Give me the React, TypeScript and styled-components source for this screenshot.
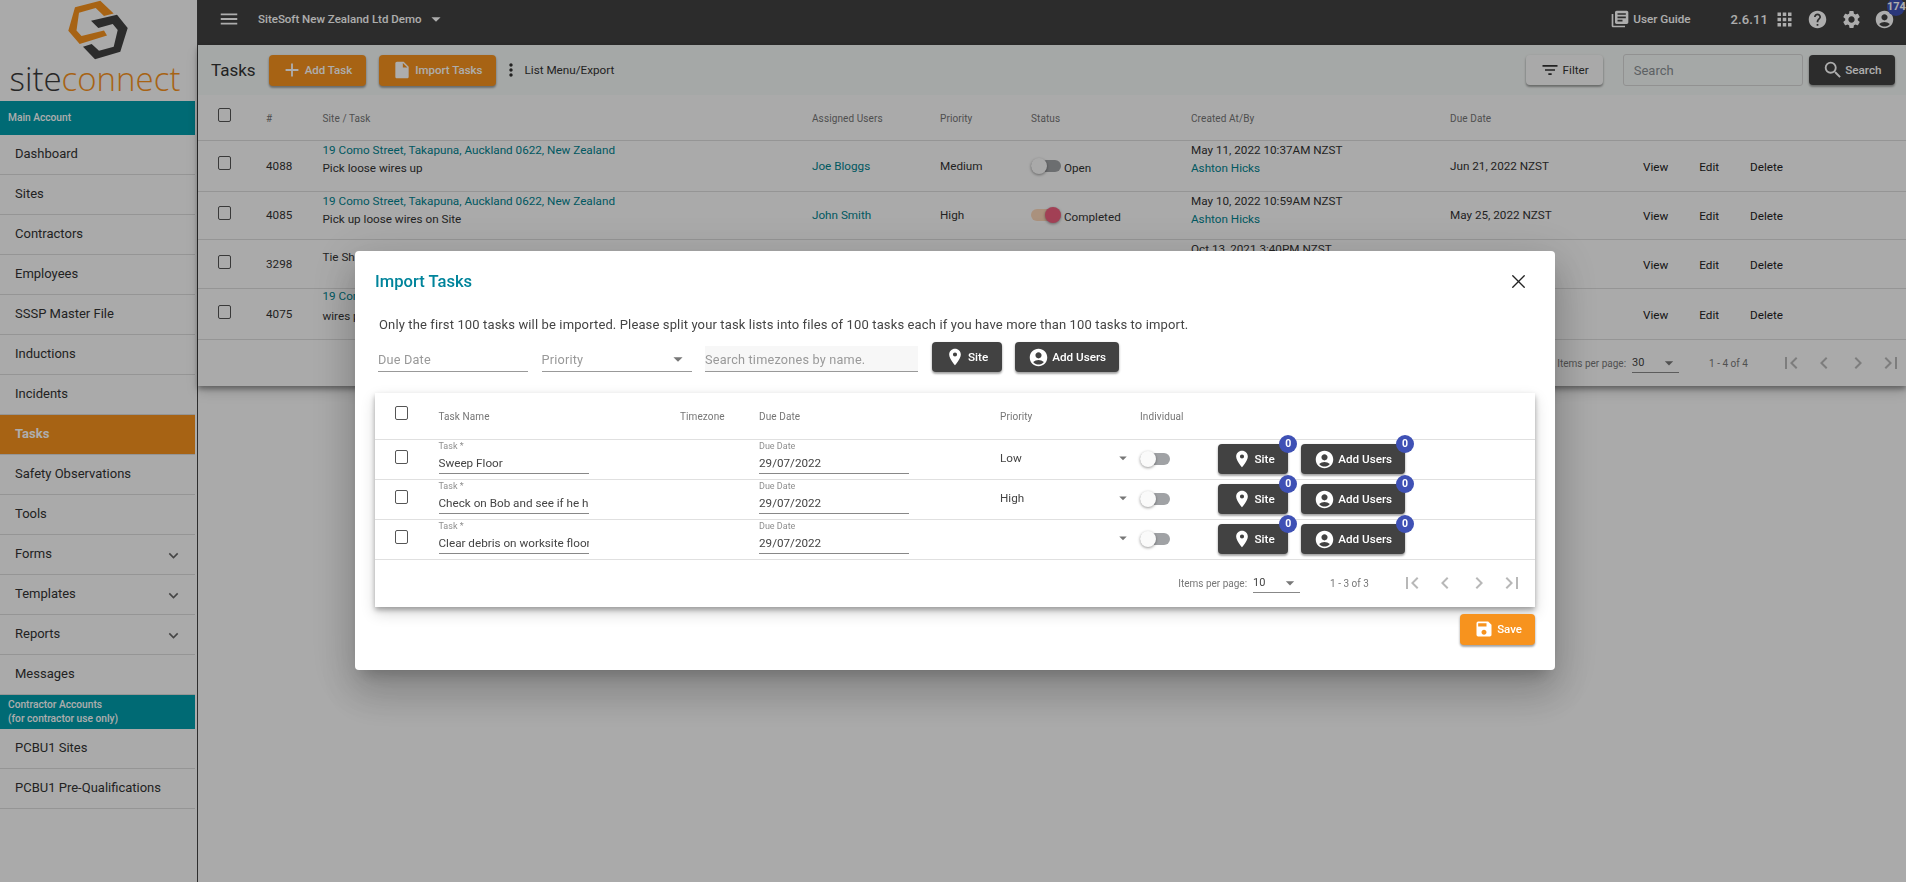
import React from 'react'
import styled, { createGlobalStyle } from 'styled-components'
import { X } from 'lucide-react'
import {
  MdAccountCircle,
  MdAdd,
  MdApps,
  MdArrowDropDown,
  MdChevronLeft,
  MdChevronRight,
  MdExpandMore,
  MdFilterList,
  MdFirstPage,
  MdHelp,
  MdInsertDriveFile,
  MdLastPage,
  MdLibraryBooks,
  MdMenu,
  MdMoreVert,
  MdRoom,
  MdSave,
  MdSearch,
  MdSettings,
} from 'react-icons/md'

const GlobalStyle = createGlobalStyle`
  html, body {
    margin: 0;
    padding: 0;
    background: #fbfbfb;
    font-family: Roboto, "Liberation Sans", sans-serif;
    color: #333;
  }
  * { box-sizing: border-box; }
`

const Page = styled.div`
  display: flex;
  width: 1906px;
  height: 882px;
  overflow: hidden;
  background: #fbfbfb;
`

/* sidebar */
const Sidebar = styled.aside`
  width: 198px;
  flex: none;
  padding-right: 2px;
  border-right: 1px solid #444;
`
const LogoBlock = styled.div`
  height: 101px;
  display: flex;
  flex-direction: column;
  align-items: center;
`
const LogoWord = styled.div`
  font-family: "Open Sans", sans-serif;
  font-size: 33px;
  font-weight: 300;
  line-height: 34px;
  margin-top: 2px;
  margin-right: 5px;
  color: #3a3a3a;
  span { color: #f7931e; }
`
const AccountLabel = styled.div`
  height: 34px;
  display: flex;
  flex-direction: column;
  justify-content: center;
  background: #009dac;
  color: #fff;
  font-size: 10.2px;
  font-weight: 500;
  line-height: 14px;
  padding-left: 8px;
`
const MenuItem = styled.div<{ $active?: boolean }>`
  height: 40px;
  display: flex;
  align-items: center;
  justify-content: space-between;
  padding: 0 12px 2px 15px;
  font-size: 13px;
  font-weight: ${(p) => (p.$active ? 700 : 400)};
  color: ${(p) => (p.$active ? '#fff' : '#333')};
  background: ${(p) => (p.$active ? '#f7931e' : 'transparent')};
  border-bottom: 1px solid #dcdcdc;
  svg { color: #666; margin-top: 4px; }
`

/* main column */
const Main = styled.main`
  flex: 1;
  min-width: 0;
`
const TopBar = styled.header`
  height: 45px;
  display: flex;
  align-items: center;
  padding: 0 11px 7px 20px;
  background: #424242;
  color: #fff;
`
const CompanyName = styled.div`
  display: flex;
  align-items: center;
  gap: 4px;
  font-size: 11.5px;
  font-weight: 500;
  margin-left: 18px;
`
const TopRight = styled.div`
  margin-left: auto;
  display: flex;
  align-items: center;
`
const GuideLabel = styled.span`
  font-size: 11.7px;
  font-weight: 500;
  margin-left: 3px;
`
const Version = styled.span`
  font-size: 13px;
  font-weight: 500;
  letter-spacing: 0.1px;
  margin: 0 1px 0 40px;
`
const TopIcon = styled.span<{ $gap: number }>`
  position: relative;
  display: flex;
  margin-left: ${(p) => p.$gap}px;
`
const CountBadge = styled.span`
  position: absolute;
  top: -11px;
  right: -10px;
  width: 18px;
  height: 18px;
  border-radius: 50%;
  background: #3f51b5;
  color: #fff;
  font-size: 11px;
  font-weight: 700;
  text-align: center;
  line-height: 18px;
`

const Card = styled.section`
  background: #fbfbfb;
  box-shadow: 0 3px 5px rgba(0, 0, 0, 0.35), 0 6px 12px rgba(0, 0, 0, 0.14);
`
const Toolbar = styled.div`
  height: 50px;
  display: flex;
  align-items: center;
  padding: 0 11px 0 13px;
  background: #f4f8f6;
`
const PageTitle = styled.h1`
  margin: 0 13px 0 0;
  font-size: 17px;
  font-weight: 400;
  color: #333;
`
const Button = styled.button<{ $tone: 'orange' | 'dark' | 'light' }>`
  position: relative;
  height: ${(p) => (p.$tone === 'orange' ? 31 : 30)}px;
  display: inline-flex;
  align-items: center;
  gap: 3px;
  padding: 0 13px;
  border: 0;
  border-radius: 4px;
  font-family: inherit;
  font-size: ${(p) => (p.$tone === 'orange' ? 11.5 : 11.7)}px;
  font-weight: ${(p) => (p.$tone === 'light' ? 400 : 500)};
  white-space: nowrap;
  color: ${(p) => (p.$tone === 'light' ? '#333' : '#fff')};
  background: ${(p) =>
    p.$tone === 'orange' ? '#f7931e' : p.$tone === 'dark' ? '#424242' : '#fafafa'};
  box-shadow: 0 2px 2px rgba(0, 0, 0, 0.25), 0 1px 3px rgba(0, 0, 0, 0.2);
`
const AddTaskButton = styled(Button)`
  margin-right: 13px;
  padding-right: 14px;
  svg { margin: 0 -1px; }
`
const FilterButton = styled(Button)`
  padding: 0 14px;
`
const SearchButton = styled(Button)`
  padding: 0 13.5px;
  svg { margin-right: -2px; }
`
const SiteAction = styled(Button)`
  padding: 0 13.5px;
`
const ListMenu = styled.div`
  display: flex;
  align-items: center;
  margin-left: 5px;
  gap: 4px;
  font-size: 11.7px;
  color: #333;
`
const ToolbarRight = styled.div`
  margin-left: auto;
  display: flex;
  align-items: center;
`
const SearchBox = styled.input`
  width: 180px;
  height: 32px;
  margin: 0 6px 0 20px;
  padding: 0 10px;
  border: 1px solid #d6d6d6;
  border-radius: 3px;
  background: transparent;
  font-family: inherit;
  font-size: 13px;
  &::placeholder { color: #8a8f94; opacity: 1; }
`

/* tasks table */
const taskCols = '48px 56.5px 489.5px 128px 91px 160px 259px 193px 1fr'
const TaskRow = styled.div<{ $h: number }>`
  height: ${(p) => p.$h}px;
  display: grid;
  grid-template-columns: ${taskCols};
  align-items: center;
  padding-left: 20px;
  border-bottom: 1px solid #dcdcdc;
  font-size: 11.7px;
  color: #333;
`
const HeadCell = styled.div`
  font-size: 10px;
  font-weight: 400;
  letter-spacing: 0.1px;
  color: #757575;
  padding-top: 2px;
`
const Check = styled.input.attrs({ type: 'checkbox' })`
  appearance: none;
  display: block;
  width: 13px;
  height: 14px;
  margin: 0 0 5px;
  border: 1.3px solid #555;
  border-radius: 2px;
  background: transparent;
`
const Stack = styled.div<{ $top?: number; $line?: number }>`
  align-self: start;
  margin-top: ${(p) => p.$top ?? 0}px;
  line-height: ${(p) => p.$line ?? 18}px;
  white-space: nowrap;
`
const TealLink = styled.div`
  color: #00838f;
  white-space: nowrap;
`
const StatusCell = styled.div`
  display: flex;
  align-items: center;
  gap: 3px;
  span { padding-top: 4px; }
`
const Track = styled.div<{ $on?: boolean }>`
  position: relative;
  width: 30px;
  height: 12px;
  flex: none;
  border-radius: 6px;
  background: ${(p) => (p.$on ? '#fbd6b8' : '#a0a2a5')};
`
const Thumb = styled.div<{ $on?: boolean }>`
  position: absolute;
  top: -2px;
  left: ${(p) => (p.$on ? 14 : 0)}px;
  width: 16px;
  height: 16px;
  border-radius: 50%;
  background: ${(p) => (p.$on ? '#ef5f7e' : '#fafafa')};
  box-shadow: 0 1px 3px rgba(0, 0, 0, 0.4);
`
const Actions = styled.div`
  display: flex;
  gap: 31px;
  padding-top: 2px;
  color: #222;
`

/* paginator shared by both tables */
const Pager = styled.div<{ $right: number }>`
  height: ${(p) => (p.$right === 3 ? 46 : 47)}px;
  display: flex;
  justify-content: flex-end;
  align-items: center;
  padding-right: ${(p) => p.$right}px;
  font-size: 10px;
  color: #777;
`
const PageSize = styled.div`
  width: 47px;
  height: 20px;
  margin: 0 30px 0 6px;
  display: flex;
  align-items: center;
  justify-content: space-between;
  border-bottom: 1px solid #888;
  color: #444;
  font-size: 11px;
  svg { color: #777; }
`
const PagerIcons = styled.div`
  display: flex;
  gap: 9.4px;
  margin-left: 31px;
  color: #b8b8b8;
`

/* import dialog */
const Backdrop = styled.div`
  position: fixed;
  inset: 0;
  padding: 251px 0 0 355px;
  background: rgba(0, 0, 0, 0.32);
`
const Dialog = styled.div`
  width: 1200px;
  height: 419px;
  padding: 0 20px 27px;
  border-radius: 4px;
  background: #fff;
  box-shadow: 0 11px 15px -7px rgba(0, 0, 0, 0.2), 0 24px 38px 3px rgba(0, 0, 0, 0.14),
    0 9px 46px 8px rgba(0, 0, 0, 0.12);
`
const DialogHead = styled.div`
  height: 60px;
  display: flex;
  align-items: center;
  justify-content: space-between;
  padding-right: 5.5px;
  svg { color: #222; }
`
const DialogTitle = styled.h2`
  margin: 0;
  font-size: 16.6px;
  font-weight: 500;
  color: #00849b;
`
const Intro = styled.p`
  margin: 0;
  padding-left: 4px;
  font-size: 13px;
  line-height: 28px;
  letter-spacing: 0.13px;
  color: #444;
`
const FilterRow = styled.div`
  height: 30px;
  margin-top: 3px;
  padding-left: 3px;
  display: flex;
  gap: 13.5px;
`
const Underlined = styled.div<{ $w: number; $tint?: boolean }>`
  width: ${(p) => p.$w}px;
  height: 26px;
  margin-top: 4px;
  padding-top: 1px;
  display: flex;
  align-items: center;
  justify-content: space-between;
  border-bottom: 1px solid #999;
  background: ${(p) => (p.$tint ? '#f7f7f7' : 'transparent')};
  font-size: 12.7px;
  letter-spacing: 0.2px;
  color: #999;
  svg { color: #777; margin-right: 3px; }
`
const InnerCard = styled.div`
  margin-top: 21px;
  background: #fff;
  box-shadow: 0 3px 5px rgba(0, 0, 0, 0.3), 0 6px 14px rgba(0, 0, 0, 0.16);
`
const importCols = '43.5px 241.5px 79px 241px 140px 78px 1fr'
const ImportRow = styled.div<{ $h: number }>`
  height: ${(p) => p.$h}px;
  display: grid;
  grid-template-columns: ${importCols};
  align-items: center;
  padding-left: 20px;
  border-bottom: 1px solid #e0e0e0;
  font-size: 11.7px;
  color: #444;
`
const Field = styled.div`
  width: 150px;
  height: 34px;
  align-self: start;
  border-bottom: 1px solid #888;
`
const FieldLabel = styled.div`
  height: 13px;
  font-size: 9px;
  line-height: 13px;
  color: #8e8e8e;
`
const FieldValue = styled.div`
  height: 20px;
  line-height: 20px;
  overflow: hidden;
  white-space: nowrap;
  color: #444;
`
const PriorityCell = styled.div`
  width: 132px;
  display: flex;
  align-items: center;
  justify-content: space-between;
  padding-bottom: 2px;
  svg { color: #777; }
`
const RowButtons = styled.div`
  display: flex;
  gap: 13px;
`
const Count = styled.span`
  position: absolute;
  top: -9px;
  right: -9px;
  width: 18px;
  height: 18px;
  border-radius: 50%;
  background: #3f51b5;
  color: #fff;
  font-size: 10.5px;
  font-weight: 700;
  line-height: 18px;
  text-align: center;
`
const DialogFoot = styled.div`
  margin-top: 7px;
  display: flex;
  justify-content: flex-end;
`
const SaveButton = styled(Button)`
  padding: 0 13px 0 14px;
  background: #f7931e;
`

const Toggle = ({ on }: { on?: boolean }) => (
  <Track $on={on}>
    <Thumb $on={on} />
  </Track>
)

const Paginator = ({ size, range, right }: { size: number; range: string; right: number }) => (
  <Pager $right={right}>
    Items per page:
    <PageSize>
      {size}
      <MdArrowDropDown size={20} />
    </PageSize>
    {range}
    <PagerIcons>
      <MdFirstPage size={24} />
      <MdChevronLeft size={24} />
      <MdChevronRight size={24} />
      <MdLastPage size={24} />
    </PagerIcons>
  </Pager>
)

const SiteButton = ({ count }: { count?: boolean }) => (
  <SiteAction $tone="dark">
    <MdRoom size={20} />
    Site
    {count && <Count>0</Count>}
  </SiteAction>
)

const UsersButton = ({ count }: { count?: boolean }) => (
  <Button $tone="dark">
    <MdAccountCircle size={21} />
    Add Users
    {count && <Count>0</Count>}
  </Button>
)

const RowActions = () => (
  <Actions>
    <span>View</span>
    <span>Edit</span>
    <span>Delete</span>
  </Actions>
)

const menu = [
  'Dashboard',
  'Sites',
  'Contractors',
  'Employees',
  'SSSP Master File',
  'Inductions',
  'Incidents',
  'Tasks',
  'Safety Observations',
  'Tools',
  'Forms',
  'Templates',
  'Reports',
  'Messages',
]
const expandable = ['Forms', 'Templates', 'Reports']

const importRows = [
  { task: 'Sweep Floor', priority: 'Low' },
  { task: 'Check on Bob and see if he h', priority: 'High' },
  { task: 'Clear debris on worksite floor', priority: '' },
]

function App() {
  return (
    <>
      <GlobalStyle />
      <Page>
        <Sidebar>
          <LogoBlock>
            <svg width="60" height="60" viewBox="0 0 60 60">
              <polygon
                fill="#f7931e"
                points="32.3,0.7 45.7,13.5 36,16 27.7,8 11,12.7 8.5,30.5 13.5,36 36,30.5 39,35.5 11.7,44 0.3,30.7 7,7.3"
              />
              <polygon
                fill="#424242"
                points="23,20.7 49,14.7 59.7,28 52.3,51.7 27,59.3 15,46.7 23.7,44 31,50.7 45.7,46.7 49.7,30 44.7,24 30.3,28"
              />
            </svg>
            <LogoWord>
              site<span>connect</span>
            </LogoWord>
          </LogoBlock>
          <AccountLabel>Main Account</AccountLabel>
          {menu.map((item) => (
            <MenuItem key={item} $active={item === 'Tasks'}>
              {item}
              {expandable.includes(item) && <MdExpandMore size={19} />}
            </MenuItem>
          ))}
          <AccountLabel>
            <div>Contractor Accounts</div>
            <div>(for contractor use only)</div>
          </AccountLabel>
          <MenuItem>PCBU1 Sites</MenuItem>
          <MenuItem>PCBU1 Pre-Qualifications</MenuItem>
        </Sidebar>

        <Main>
          <TopBar>
            <MdMenu size={22} />
            <CompanyName>
              SiteSoft New Zealand Ltd Demo
              <MdArrowDropDown size={22} />
            </CompanyName>
            <TopRight>
              <MdLibraryBooks size={20} />
              <GuideLabel>User Guide</GuideLabel>
              <Version>2.6.11</Version>
              <TopIcon $gap={5}>
                <MdApps size={21} />
              </TopIcon>
              <TopIcon $gap={12}>
                <MdHelp size={21} />
              </TopIcon>
              <TopIcon $gap={13}>
                <MdSettings size={21} />
              </TopIcon>
              <TopIcon $gap={12}>
                <MdAccountCircle size={21} />
                <CountBadge>174</CountBadge>
              </TopIcon>
            </TopRight>
          </TopBar>

          <Card>
            <Toolbar>
              <PageTitle>Tasks</PageTitle>
              <AddTaskButton $tone="orange">
                <MdAdd size={22} />
                Add Task
              </AddTaskButton>
              <Button $tone="orange">
                <MdInsertDriveFile size={20} />
                Import Tasks
              </Button>
              <ListMenu>
                <MdMoreVert size={20} />
                List Menu/Export
              </ListMenu>
              <ToolbarRight>
                <FilterButton $tone="light">
                  <MdFilterList size={20} />
                  Filter
                </FilterButton>
                <SearchBox placeholder="Search" readOnly />
                <SearchButton $tone="dark">
                  <MdSearch size={22} />
                  Search
                </SearchButton>
              </ToolbarRight>
            </Toolbar>

            <TaskRow $h={46}>
              <Check />
              <HeadCell>#</HeadCell>
              <HeadCell>Site / Task</HeadCell>
              <HeadCell>Assigned Users</HeadCell>
              <HeadCell>Priority</HeadCell>
              <HeadCell>Status</HeadCell>
              <HeadCell>Created At/By</HeadCell>
              <HeadCell>Due Date</HeadCell>
            </TaskRow>

            <TaskRow $h={50.5}>
              <Check />
              <div>4088</div>
              <Stack>
                <TealLink>19 Como Street, Takapuna, Auckland 0622, New Zealand</TealLink>
                <div>Pick loose wires up</div>
              </Stack>
              <TealLink>Joe Bloggs</TealLink>
              <div>Medium</div>
              <StatusCell>
                <Toggle />
                <span>Open</span>
              </StatusCell>
              <Stack>
                <div>May 11, 2022 10:37AM NZST</div>
                <TealLink>Ashton Hicks</TealLink>
              </Stack>
              <div>Jun 21, 2022 NZST</div>
              <RowActions />
            </TaskRow>

            <TaskRow $h={48.5}>
              <Check />
              <div>4085</div>
              <Stack>
                <TealLink>19 Como Street, Takapuna, Auckland 0622, New Zealand</TealLink>
                <div>Pick up loose wires on Site</div>
              </Stack>
              <TealLink>John Smith</TealLink>
              <div>High</div>
              <StatusCell>
                <Toggle on />
                <span>Completed</span>
              </StatusCell>
              <Stack>
                <div>May 10, 2022 10:59AM NZST</div>
                <TealLink>Ashton Hicks</TealLink>
              </Stack>
              <div>May 25, 2022 NZST</div>
              <RowActions />
            </TaskRow>

            <TaskRow $h={49}>
              <Check />
              <div>3298</div>
              <Stack $top={8}>
                <div>Tie Sh</div>
              </Stack>
              <div />
              <div />
              <div />
              <Stack>
                <div>Oct 13, 2021 3:40PM NZST</div>
              </Stack>
              <div />
              <RowActions />
            </TaskRow>

            <TaskRow $h={51}>
              <Check />
              <div>4075</div>
              <Stack $top={-2} $line={19.5}>
                <TealLink>19 Como</TealLink>
                <div>wires p</div>
              </Stack>
              <div />
              <div />
              <div />
              <div />
              <div />
              <RowActions />
            </TaskRow>

            <Paginator size={30} range="1 - 4 of 4" right={3} />
          </Card>
        </Main>
      </Page>

      <Backdrop>
        <Dialog>
          <DialogHead>
            <DialogTitle>Import Tasks</DialogTitle>
            <X size={23} strokeWidth={1.4} />
          </DialogHead>
          <Intro>
            Only the first 100 tasks will be imported. Please split your task lists into files of
            100 tasks each if you have more than 100 tasks to import.
          </Intro>
          <FilterRow>
            <Underlined $w={150}>Due Date</Underlined>
            <Underlined $w={150}>
              Priority
              <MdArrowDropDown size={22} />
            </Underlined>
            <Underlined $w={213} $tint>
              Search timezones by name.
            </Underlined>
            <SiteButton />
            <UsersButton />
          </FilterRow>

          <InnerCard>
            <ImportRow $h={46.5}>
              <Check />
              <HeadCell>Task Name</HeadCell>
              <HeadCell>Timezone</HeadCell>
              <HeadCell>Due Date</HeadCell>
              <HeadCell>Priority</HeadCell>
              <HeadCell>Individual</HeadCell>
            </ImportRow>
            {importRows.map((row) => (
              <ImportRow key={row.task} $h={40}>
                <Check />
                <Field>
                  <FieldLabel>Task *</FieldLabel>
                  <FieldValue>{row.task}</FieldValue>
                </Field>
                <div />
                <Field>
                  <FieldLabel>Due Date</FieldLabel>
                  <FieldValue>29/07/2022</FieldValue>
                </Field>
                <PriorityCell>
                  <span>{row.priority}</span>
                  <MdArrowDropDown size={18} />
                </PriorityCell>
                <Toggle />
                <RowButtons>
                  <SiteButton count />
                  <UsersButton count />
                </RowButtons>
              </ImportRow>
            ))}
            <Paginator size={10} range="1 - 3 of 3" right={11} />
          </InnerCard>

          <DialogFoot>
            <SaveButton $tone="orange">
              <MdSave size={20} />
              Save
            </SaveButton>
          </DialogFoot>
        </Dialog>
      </Backdrop>
    </>
  )
}

export default App
